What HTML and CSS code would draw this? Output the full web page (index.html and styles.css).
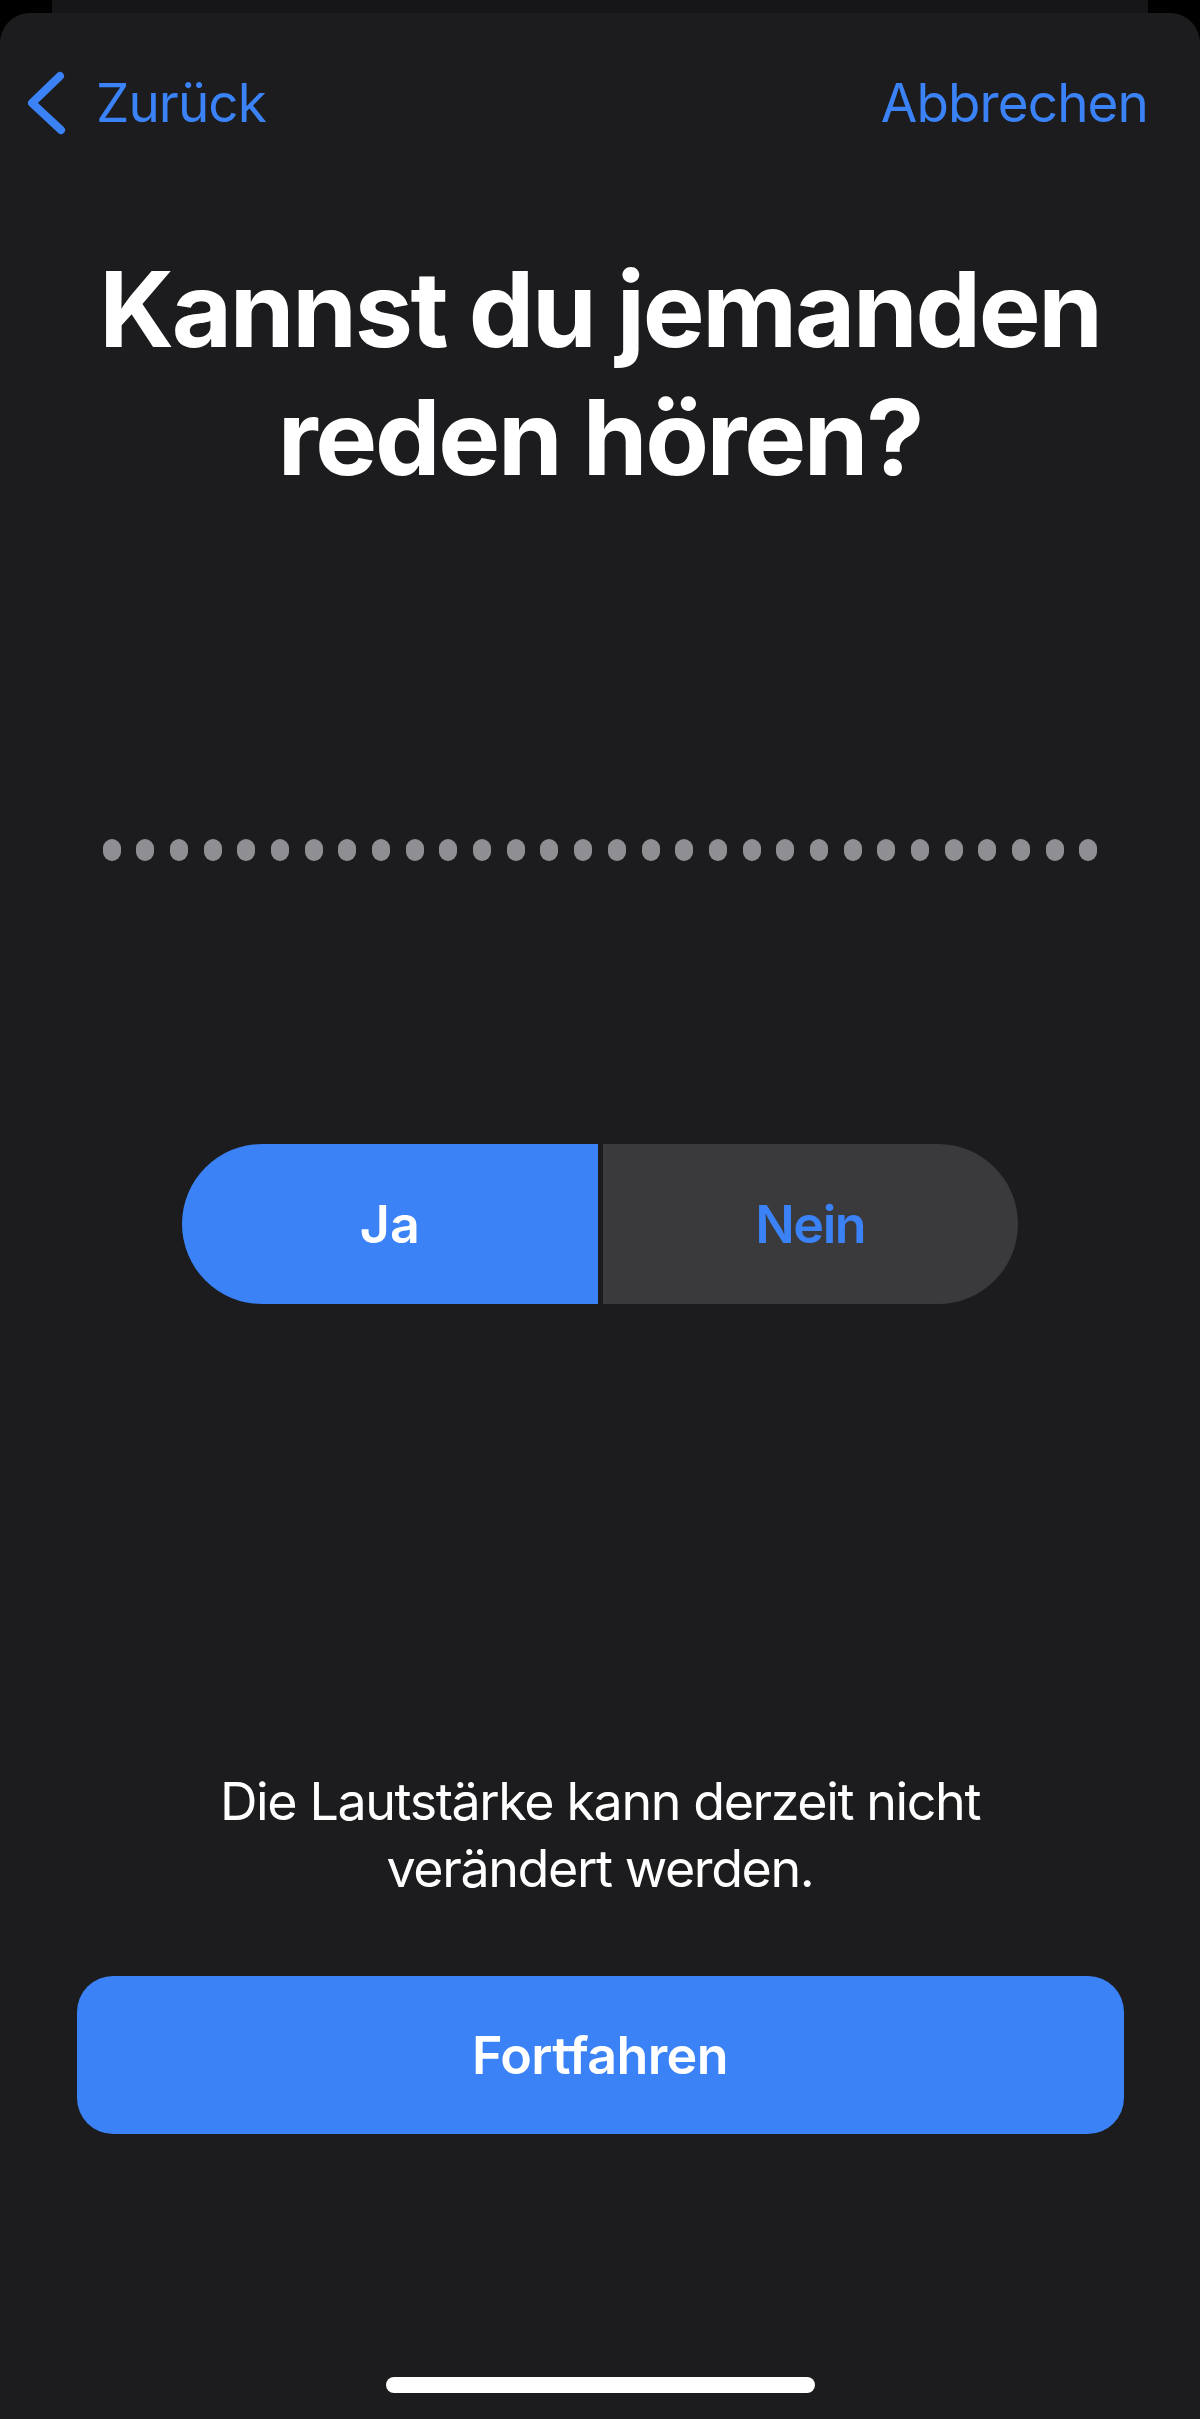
FILE: index.html
```html
<!DOCTYPE html>
<html lang="de">
<head>
  <meta charset="UTF-8" />
  <meta name="viewport" content="width=device-width, initial-scale=1.0"/>
  <title>Kannst du jemanden reden hören?</title>
  <link rel="stylesheet" href="styles.css">
</head>
<body>
  <div class="behind"></div>
  <div class="sheet">
    <div class="nav">
      <a class="nav-back" href="#">
        <svg class="chevron" width="40" height="64" viewBox="0 0 40 64">
          <polyline points="34,5 6,32 35,59" fill="none" stroke="#3a82f6" stroke-width="8" stroke-linecap="round" stroke-linejoin="round"/>
        </svg>
        <span>Zurück</span>
      </a>
      <a class="nav-cancel" href="#">Abbrechen</a>
    </div>

    <h1 class="title">Kannst du jemanden<br>reden hören?</h1>

    <div class="dots" id="dots"></div>

    <div class="segmented">
      <button class="seg seg-active">Ja</button>
      <button class="seg">Nein</button>
    </div>

    <p class="note">Die Lautstärke kann derzeit nicht<br>verändert werden.</p>

    <button class="continue">Fortfahren</button>

    <div class="home-indicator"></div>
  </div>

  <script>
    const dots = document.getElementById('dots');
    for (let i = 0; i < 30; i++) {
      const d = document.createElement('span');
      d.className = 'dot';
      dots.appendChild(d);
    }
  </script>
</body>
</html>
```

FILE: styles.css
```css
html, body {
  margin: 0;
  padding: 0;
  height: 100%;
}
body {
  background: #000;
  font-family: Inter, "Noto Sans", sans-serif;
  color: #fff;
  display: flex;
  flex-direction: column;
}
.behind {
  height: 13px;
  margin: 0 52px;
  background: #161618;
  flex-shrink: 0;
}
.sheet {
  flex: 1;
  background: #1c1c1e;
  border-radius: 30px 30px 0 0;
  padding-top: 58px;
  display: flex;
  flex-direction: column;
  align-items: center;
}
.nav {
  align-self: stretch;
  display: flex;
  justify-content: space-between;
  align-items: center;
  height: 64px;
  padding: 0 52px 0 26px;
  font-size: 53px;
  line-height: 64px;
  letter-spacing: -0.9px;
}
.nav a {
  color: #3a82f6;
  text-decoration: none;
}
.nav-back {
  display: flex;
  align-items: center;
  gap: 30px;
}
.chevron {
  display: block;
}
.title {
  margin: 110px 0 0;
  font-size: 104px;
  line-height: 128px;
  font-weight: 700;
  text-align: center;
  letter-spacing: -2.3px;
}
.dots {
  margin-top: 338px;
  display: flex;
  gap: 15.7px;
}
.dot {
  width: 18px;
  height: 22px;
  border-radius: 9px;
  background: #8e8e93;
}
.segmented {
  margin-top: 283px;
  display: flex;
  gap: 5px;
  width: 836px;
  height: 160px;
}
.seg {
  flex: 1;
  border: none;
  background: #3a3a3c;
  color: #3a82f6;
  font-family: inherit;
  font-size: 52px;
  font-weight: 600;
  letter-spacing: -1.4px;
  border-radius: 0 80px 80px 0;
}
.seg-active {
  background: #3a82f6;
  color: #fff;
  letter-spacing: 0;
  border-radius: 80px 0 0 80px;
}
.note {
  margin: 464px 0 0;
  font-size: 52px;
  line-height: 67px;
  text-align: center;
  letter-spacing: -1.4px;
}
.continue {
  margin-top: 74px;
  width: 1047px;
  height: 158px;
  border: none;
  border-radius: 36px;
  background: #3a82f6;
  color: #fff;
  font-family: inherit;
  font-size: 52px;
  font-weight: 600;
  letter-spacing: -0.6px;
}
.home-indicator {
  margin-top: 243px;
  width: 429px;
  height: 16px;
  border-radius: 8px;
  background: #fff;
}
```
